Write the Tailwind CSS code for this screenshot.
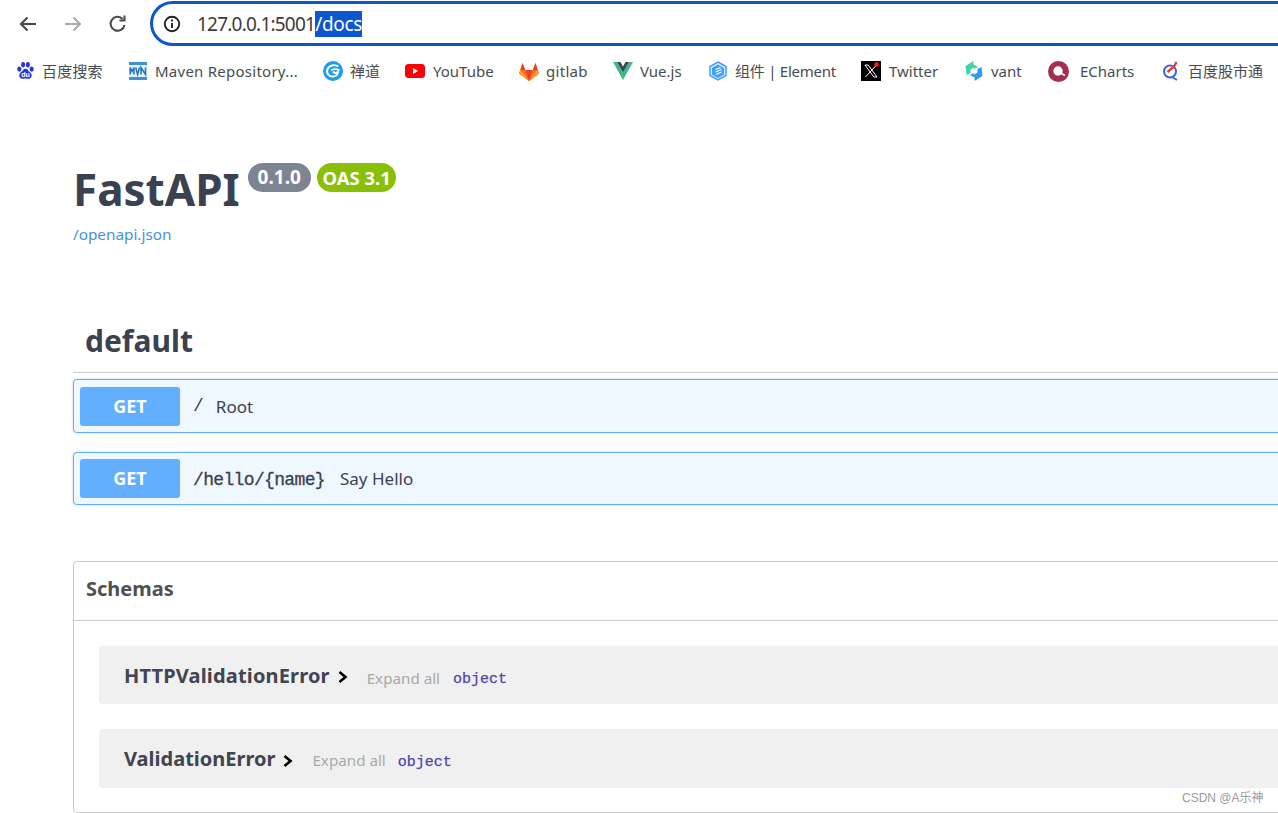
<!DOCTYPE html>
<html lang="zh">
<head>
<meta charset="utf-8">
<title>FastAPI</title>
<script src="https://cdn.jsdelivr.net/npm/@tailwindcss/browser@4"></script>
</head>
<body class="bg-white">
<div class="w-[1278px] h-[813px] overflow-hidden relative bg-white font-['Noto_Sans','Noto_Sans_CJK_SC',sans-serif]">
  <!-- toolbar -->
  <div class="h-[47px] flex items-center">
    <div class="w-[150px] shrink-0 flex items-center pl-[17px] gap-[23px]">
      <svg width="22" height="22" viewBox="0 0 22 22" fill="none" stroke="#474747" stroke-width="2"><path d="M19 11H4M10.500 4.500 4 11l6.500 6.500"/></svg>
      <svg width="22" height="22" viewBox="0 0 22 22" fill="none" stroke="#a9a9a9" stroke-width="2"><path d="M3 11h15M11.500 4.500 18 11l-6.500 6.500"/></svg>
      <svg width="22" height="22" viewBox="0 0 22 22" fill="none" stroke="#474747" stroke-width="2"><path d="M17.500 12a7 7 0 1 1-1.800-6"/><path d="M17.500 2.500v5h-5" /></svg>
    </div>
    <div class="h-[45px] w-[1300px] shrink-0 rounded-l-full border-[3px] border-[#0b57d0] flex items-center pl-[10px]">
      <svg width="18" height="18" viewBox="0 0 18 18" fill="none" stroke="#222" stroke-width="1.900" class="shrink-0"><circle cx="9" cy="9" r="7.200"/><path d="M9 8v5M9 4.600v2"/></svg>
      <div class="ml-[16px] mt-[2px] text-[19px] text-[#3c3c3c] leading-[25px] font-['Noto_Sans','sans-serif'] tracking-[-0.78px]">127.0.0.1:5001<span class="bg-[#0b57d0] text-white tracking-[-0.3px]">/docs</span></div>
    </div>
  </div>
  <!-- bookmarks -->
  <div class="h-[48px] flex items-center text-[15px] text-[#474c54] whitespace-nowrap">
    <div class="flex items-center gap-[7px] ml-[16px] w-[113px] shrink-0">
      <svg width="19" height="20" viewBox="0 0 20 20" class="shrink-0" fill="#2932e1"><ellipse cx="3.500" cy="8" rx="2.200" ry="2.800"/><ellipse cx="7.500" cy="3.500" rx="2.100" ry="2.900"/><ellipse cx="12.500" cy="3.500" rx="2.100" ry="2.900"/><ellipse cx="16.500" cy="8" rx="2.200" ry="2.800"/><path d="M10 7.500c2 0 2.800 2 4.200 3.400 1.800 1.600 2.600 2.700 2.200 4.600-.5 2.400-2.800 3-6.400 2.500-3.600.5-5.900-.1-6.400-2.500-.4-1.900.4-3 2.200-4.600C7.200 9.500 8 7.500 10 7.500z"/><text x="10" y="16.800" text-anchor="middle" font-size="7.500" font-weight="700" fill="#fff" font-family="Liberation Sans">du</text></svg>
      <span class="tracking-[0.2px]">百度搜索</span>
    </div>
    <div class="flex items-center gap-[8px] w-[194px] shrink-0">
      <svg width="18" height="18" viewBox="0 0 18 18" class="shrink-0"><rect width="18" height="3" fill="#3f8fd6"/><rect y="15" width="18" height="3" fill="#3f8fd6"/><rect y="3" width="18" height="12" fill="#e6f1fb"/><path d="M1.200 12.500V5.500l1.900 4 1.900-4v7M6.700 5.500 8.600 12.500l1.900-7M12 12.500V5.500l4.500 7V5.500" fill="none" stroke="#1f73bd" stroke-width="1.500"/></svg>
      <span class="tracking-[0.25px]">Maven Repository...</span>
    </div>
    <div class="flex items-center gap-[7px] w-[82px] shrink-0">
      <svg width="20" height="20" viewBox="0 0 20 20" class="shrink-0"><circle cx="10" cy="10" r="10" fill="#1e9bf0"/><path d="M15.500 5.500C12 3 6 4 4.300 8.500c-1.200 4 2 7.500 6 7 2.800-.4 4.500-2.300 4.700-4.500-1.500 1.500-3.500 1-5-.3" fill="none" stroke="#fff" stroke-width="2"/><path d="M8 9.500c2-1.800 5-1.800 8.500-.3" fill="none" stroke="#fff" stroke-width="1.800"/></svg>
      <span>禅道</span>
    </div>
    <div class="flex items-center gap-[8px] w-[114px] shrink-0">
      <svg width="20" height="14" viewBox="0 0 20 14" class="shrink-0"><rect width="20" height="14" rx="3.500" fill="#f00"/><path d="M8 4v6l5-3z" fill="#fff"/></svg>
      <span>YouTube</span>
    </div>
    <div class="flex items-center gap-[7px] w-[94px] shrink-0">
      <svg width="20" height="19" viewBox="0 0 20 19" class="shrink-0"><path d="M10 19 0 11.500 3.500 1l2.700 7h7.600L16.500 1 20 11.500z" fill="#fc6d26"/><path d="M10 19 6.200 8h7.600z" fill="#e24329"/><path d="M3.500 1 6.200 8H1.500zM16.500 1l-2.700 7h4.700z" fill="#e24329"/><path d="M10 19 0 11.500l1.500-3.500h4.700zM10 19l10-7.500-1.500-3.500h-4.700z" fill="#fc6d26"/><path d="M10 19 0 11.500 1.500 8zM10 19l10-7.500L18.500 8z" fill="#fca326"/></svg>
      <span class="tracking-[0.3px]">gitlab</span>
    </div>
    <div class="flex items-center gap-[7px] w-[95px] shrink-0">
      <svg width="20" height="18" viewBox="0 0 20 18" class="shrink-0"><path d="M0 0h4l6 10.500L16 0h4L10 18z" fill="#41b883"/><path d="M4 0h3.500L10 4.500 12.500 0H16l-6 10.500z" fill="#35495e"/></svg>
      <span>Vue.js</span>
    </div>
    <div class="flex items-center gap-[7px] w-[153px] shrink-0">
      <svg width="20" height="20" viewBox="0 0 20 20" class="shrink-0"><path d="M10 1l8 4.500v9L10 19l-8-4.500v-9z" fill="#d8eeff" stroke="#409eff" stroke-width="1.500"/><path d="M10 3.500l6 3.500v6.500L10 17l-6-3.500V7z" fill="#409eff"/><path d="M7.500 8.500l5-2M7.500 11l6-2.500M8 13.500l5.500-2.500" stroke="#fff" stroke-width="1.300" fill="none"/></svg>
      <span class="tracking-[-0.25px]">组件 | Element</span>
    </div>
    <div class="flex items-center gap-[8px] w-[104px] shrink-0">
      <div class="relative shrink-0 w-[20px] h-[20px]">
        <svg width="20" height="20" viewBox="0 0 20 20"><rect width="20" height="20" fill="#000"/><path d="M4 4h3.200l8.800 12h-3.200z" fill="none" stroke="#fff" stroke-width="1"/><path d="M15.500 4 4.500 16" fill="none" stroke="#fff" stroke-width="1"/><circle cx="15.500" cy="3.500" r="2.400" fill="#f01818"/></svg>
      </div>
      <span>Twitter</span>
    </div>
    <div class="flex items-center gap-[8px] w-[83px] shrink-0">
      <svg width="18" height="20" viewBox="0 0 18 20" class="shrink-0"><path d="M8.500 0v3.500L13 6 10 7.800 8.500 6.800 5.500 8.500V12l-4 2L.5 5z" fill="#3ed3a8"/><path d="M8.500 0v3.500L13 6 10 7.800 8.500 6.800 5.500 8.500V12l-4 2L.5 5z" fill="#2f9bf0" transform="rotate(180 9 10)"/></svg>
      <span>vant</span>
    </div>
    <div class="flex items-center gap-[11px] w-[114px] shrink-0">
      <svg width="21" height="21" viewBox="0 0 21 21" class="shrink-0"><circle cx="10.500" cy="10.500" r="10.500" fill="#a52d50"/><circle cx="10" cy="10" r="4.700" fill="#fff"/><path d="M11 11l6 3.500" stroke="#fff" stroke-width="1.500"/></svg>
      <span>ECharts</span>
    </div>
    <div class="flex items-center gap-[8px] shrink-0">
      <svg width="18" height="20" viewBox="0 0 18 20" fill="none" class="shrink-0"><circle cx="8" cy="10.500" r="6" stroke="#3b62e8" stroke-width="2"/><path d="M5.500 11 12 5.500 14.500 1" stroke="#e5402a" stroke-width="2.400"/><path d="M10 16l5 3" stroke="#3b62e8" stroke-width="2"/></svg>
      <span>百度股市通</span>
    </div>
  </div>
  <!-- main -->
  <div class="pl-[73px] -mr-[40px]">
    <div class="pt-[62px] h-[208px]">
      <div class="flex items-start">
        <h1 class="text-[44px] leading-[65px] font-bold text-[#3b4151]">FastAPI</h1>
        <div class="ml-[8px] mt-[6px] h-[29px] px-[10px] rounded-full bg-[#7d8492] text-white text-[19px] font-bold leading-[29px]">0.1.0</div>
        <div class="ml-[6px] mt-[6px] h-[29px] px-[5.500px] rounded-full bg-[#89bf04] text-white text-[18.500px] font-bold leading-[29px]">OAS 3.1</div>
      </div>
      <div class="text-[15.300px] leading-[20px] text-[#4990e2] mt-[2px]">/openapi.json</div>
    </div>
    <div class="h-[70px] border-b border-[#c9cacd] flex items-center pl-[12px] pt-[6px]">
      <h2 class="text-[30px] font-bold text-[#3b4151] leading-[40px]">default</h2>
    </div>
    <div class="mt-[6px] h-[54px] rounded-[4px] border border-[#61affe] bg-[#eff7ff] flex items-center pl-[6px] shadow-[0_0_3px_rgba(0,0,0,0.19)]">
      <div class="w-[100px] h-[39px] rounded-[3px] bg-[#61affe] text-white text-[18px] font-bold flex items-center justify-center">GET</div>
      <span class="ml-[13px] text-[18px] text-[#3b4151] font-['Liberation_Mono',monospace]">/</span>
      <span class="ml-[12px] mt-[2px] text-[17px] text-[#3b4151]">Root</span>
    </div>
    <div class="mt-[19px] h-[53px] rounded-[4px] border border-[#61affe] bg-[#eff7ff] flex items-center pl-[6px] shadow-[0_0_3px_rgba(0,0,0,0.19)]">
      <div class="w-[100px] h-[39px] rounded-[3px] bg-[#61affe] text-white text-[18px] font-bold flex items-center justify-center">GET</div>
      <span class="ml-[13px] mt-[4px] text-[18px] text-[#3b4151] font-['Liberation_Mono',monospace] tracking-[-0.65px] [-webkit-text-stroke:0.3px_#3b4151]">/hello/{name}</span>
      <span class="ml-[15px] text-[17px] text-[#3b4151]">Say Hello</span>
    </div>
    <div class="mt-[56px] h-[252px] rounded-[4px] border border-[#c9cacd]">
      <div class="h-[59px] border-b border-[#c9cacd] flex items-center pl-[12px] pb-[4px]">
        <h4 class="text-[20px] font-bold text-[#505050]">Schemas</h4>
      </div>
      <div class="pl-[25px] pt-[25px] flex flex-col gap-[25px]">
        <div class="h-[58px] rounded-[4px] bg-[#f0f0f0] flex items-center pl-[25px] pt-[2px]">
          <span class="text-[20px] font-bold text-[#404550] tracking-[0.16px]">HTTPValidationError</span>
          <svg width="12" height="14" viewBox="0 0 12 14" fill="none" stroke="#000" stroke-width="2.600" class="ml-[7px] mt-[2px]"><path d="M2.500 2l6 5-6 5"/></svg>
          <span class="ml-[18px] mt-[4px] text-[15.200px] text-[#a9a9a9]">Expand all</span>
          <span class="ml-[13px] mt-[8px] text-[15px] text-[#5243a8] font-['Liberation_Mono',monospace] [-webkit-text-stroke:0.25px_#5243a8]">object</span>
        </div>
        <div class="h-[59px] rounded-[4px] bg-[#f0f0f0] flex items-center pl-[25px]">
          <span class="text-[20px] font-bold text-[#404550]">ValidationError</span>
          <svg width="12" height="14" viewBox="0 0 12 14" fill="none" stroke="#000" stroke-width="2.600" class="ml-[7px] mt-[4px]"><path d="M2.500 2l6 5-6 5"/></svg>
          <span class="ml-[18px] mt-[4px] text-[15.200px] text-[#a9a9a9]">Expand all</span>
          <span class="ml-[12px] mt-[10px] text-[15px] text-[#5243a8] font-['Liberation_Mono',monospace] [-webkit-text-stroke:0.25px_#5243a8]">object</span>
        </div>
      </div>
    </div>
  </div>
  <!-- watermark -->
  <div class="absolute left-[1182px] top-[790px] text-[12px] leading-[16px] text-[#9a9a9a] whitespace-nowrap font-['Liberation_Sans','Noto_Sans_CJK_SC',sans-serif]">CSDN @A乐神</div>
</div>
</body>
</html>
